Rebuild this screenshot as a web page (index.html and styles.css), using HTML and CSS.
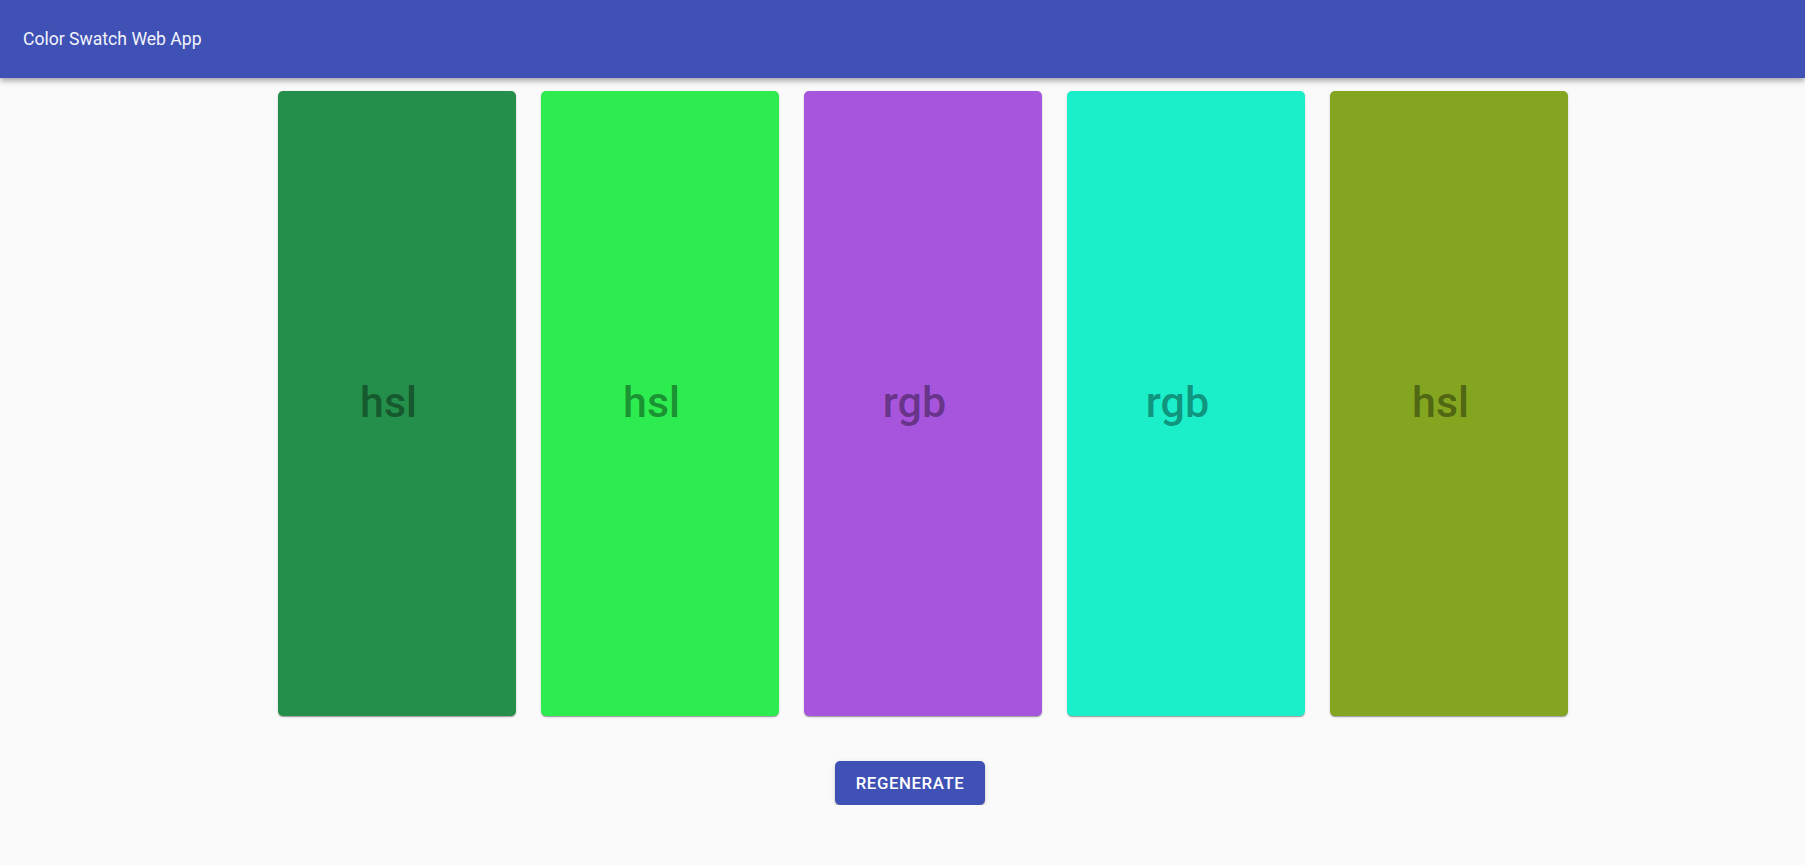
FILE: index.html
```html
<!DOCTYPE html>
<html>
<head>
<meta charset="utf-8">
<title>Color Swatch Web App</title>
<link rel="stylesheet" href="styles.css">
</head>
<body>
<header class="toolbar">
  <span class="title">Color Swatch Web App</span>
</header>
<main class="content">
  <section class="swatches">
    <div class="swatch swatch-1"><span class="label">hsl</span></div>
    <div class="swatch swatch-2"><span class="label">hsl</span></div>
    <div class="swatch swatch-3"><span class="label">rgb</span></div>
    <div class="swatch swatch-4"><span class="label">rgb</span></div>
    <div class="swatch swatch-5"><span class="label">hsl</span></div>
  </section>
  <div class="actions">
    <button class="btn">REGENERATE</button>
  </div>
</main>
</body>
</html>
```

FILE: styles.css
```css
* { box-sizing: border-box; }
html, body {
  margin: 0;
  padding: 0;
  background: #fafafa;
  font-family: Roboto, "Noto Sans", "Liberation Sans", sans-serif;
}
.toolbar {
  height: 78px;
  background: #3f51b5;
  color: #f3f3fb;
  display: flex;
  align-items: center;
  padding: 0 23px;
  box-shadow: 0 2px 5px rgba(0,0,0,0.25), 0 4px 6px rgba(0,0,0,0.12);
  position: relative;
  z-index: 2;
}
.title {
  font-size: 17.6px;
  font-weight: 400;
  margin-top: -1px;
}
.content {
  padding-top: 13px;
}
.swatches {
  display: flex;
  gap: 25px;
  padding-left: 278px;
}
.swatch {
  width: 238px;
  height: 625px;
  border-radius: 5px;
  display: flex;
  align-items: center;
  justify-content: center;
  padding-right: 17px;
  box-shadow: 0 2px 1px -1px rgba(0,0,0,0.2), 0 1px 1px 0 rgba(0,0,0,0.14), 0 1px 3px 0 rgba(0,0,0,0.12);
}
.label {
  font-size: 43px;
  font-weight: 500;
  color: rgba(0,0,0,0.4);
  margin-top: -4px;
}
.swatch-1 { background: #248f4a; }
.swatch-2 { background: #2dec50; }
.swatch-3 { background: #a855de; }
.swatch-4 { background: #1aefca; }
.swatch-5 { background: #83a51f; }
.actions {
  display: flex;
  padding-top: 45px;
  padding-left: 835px;
}
.btn {
  width: 150px;
  height: 44px;
  border: none;
  border-radius: 5px;
  background: #3f51b5;
  color: #fff;
  font-family: Roboto, "Noto Sans", sans-serif;
  font-size: 16.8px;
  font-weight: 500;
  letter-spacing: 0.6px;
  box-shadow: 0 3px 1px -2px rgba(0,0,0,0.2), 0 2px 2px 0 rgba(0,0,0,0.14), 0 1px 5px 0 rgba(0,0,0,0.12);
  cursor: pointer;
}
```
